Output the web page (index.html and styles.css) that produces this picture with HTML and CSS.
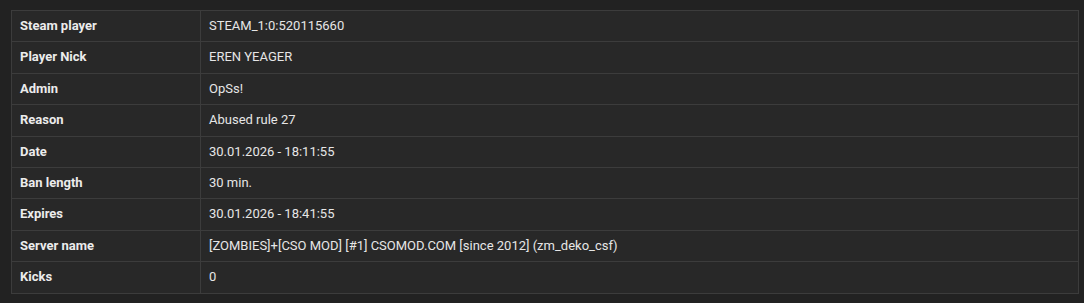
FILE: index.html
```html
<!DOCTYPE html>
<html>
<head>
<meta charset="utf-8">
<link rel="stylesheet" href="styles.css">
</head>
<body>
<div class="wrap">
<table class="info">
<tr><th>Steam player</th><td>STEAM_1:0:520115660</td></tr>
<tr><th>Player Nick</th><td>EREN YEAGER</td></tr>
<tr><th>Admin</th><td>OpSs!</td></tr>
<tr><th>Reason</th><td>Abused rule 27</td></tr>
<tr><th>Date</th><td>30.01.2026 - 18:11:55</td></tr>
<tr><th>Ban length</th><td>30 min.</td></tr>
<tr><th>Expires</th><td>30.01.2026 - 18:41:55</td></tr>
<tr><th>Server name</th><td>[ZOMBIES]+[CSO MOD] [#1] CSOMOD.COM [since 2012] (zm_deko_csf)</td></tr>
<tr><th>Kicks</th><td>0</td></tr>
</table>
</div>
</body>
</html>
```
FILE: styles.css
```css
html, body {
  margin: 0;
  padding: 0;
  background: #222222;
}
.wrap {
  padding: 10px 5px 10px 11px;
}
.info {
  width: 100%;
  border-collapse: collapse;
  background: #282828;
  font-family: Roboto, "Liberation Sans", sans-serif;
  font-size: 13px;
  line-height: 14.4px;
  color: #e6e6e6;
}
.info th, .info td {
  border: 1px solid #3c3c3c;
  padding: 8px;
  text-align: left;
  vertical-align: middle;
}
.info th {
  width: 172px;
  font-weight: bold;
  color: #ececec;
}
.info td {
  font-weight: normal;
}
```
